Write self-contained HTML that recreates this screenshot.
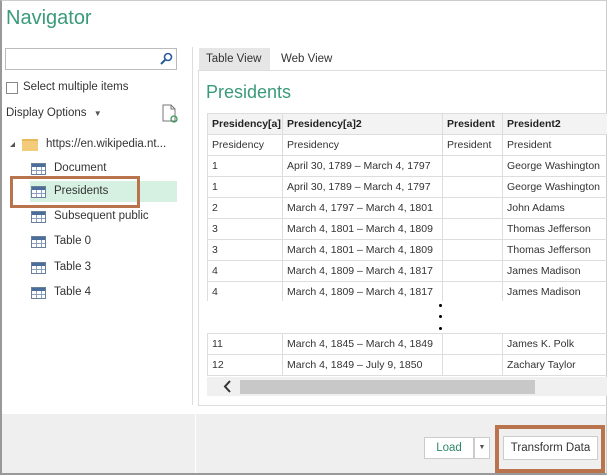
<!DOCTYPE html>
<html><head><style>
*{box-sizing:border-box;margin:0;padding:0}
body{width:607px;height:475px;overflow:hidden;background:#fff;font-family:"Liberation Sans",sans-serif;font-size:11.5px;color:#333;position:relative}
.a{position:absolute}
.frame{left:0;top:0;width:607px;height:475px;border-left:2px solid #999;border-bottom:2px solid #999;border-top:1px solid #ccc;border-right:1px solid #ccc}
.ti{width:15px;height:12px;border:1px solid #6a7f99;background:
linear-gradient(#4a6d9c 0 3px,transparent 3px),
repeating-linear-gradient(90deg,transparent 0 4px,#8aa0bb 4px 5px),
repeating-linear-gradient(0deg,#fff 0 3px,#8aa0bb 3px 4px)}
table{border-collapse:collapse;font-size:10.5px;table-layout:fixed}
td{border:1px solid #ddd;height:21px;padding:0 4px;white-space:nowrap;overflow:hidden;color:#333}
tr.h td{font-weight:bold;background:#f3f3f3;color:#222}
</style></head><body>
<div class="a frame"></div>
<div class="a" style="left:6px;top:7px;font-size:20px;color:#3a9a7a">Navigator</div>
<div class="a" style="left:5px;top:48px;width:172px;height:22px;border:1px solid #bbb"></div>
<svg class="a" style="left:159px;top:52px" width="14" height="14"><circle cx="9" cy="5" r="3.5" stroke="#2a5a9a" stroke-width="1.6" fill="none"/><line x1="6.5" y1="7.5" x2="2" y2="12" stroke="#2a5a9a" stroke-width="2"/></svg>
<div class="a" style="left:6px;top:82px;width:12px;height:12px;border:1px solid #888"></div>
<div class="a" style="left:23px;top:81px">Select multiple items</div>
<div class="a" style="left:6px;top:107px">Display Options <span style="font-size:8px;color:#555;margin-left:4px">▼</span></div>
<svg class="a" style="left:162px;top:104px" width="16" height="19"><path d="M1 1h8l4 4v12H1z" fill="#fff" stroke="#777"/><path d="M9 1v4h4" fill="none" stroke="#777"/><circle cx="12" cy="15" r="3" fill="none" stroke="#3a9a5a" stroke-width="1.3"/></svg>
<div class="a" style="left:10px;top:142px;width:0;height:0;border-left:5px solid transparent;border-bottom:5px solid #555"></div>
<div class="a" style="left:22px;top:139px;width:16px;height:12px;background:#f3cc7a;border-top:2px solid #e8b85a"></div>
<div class="a" style="left:46px;top:138px">https://en.wikipedia.nt...</div>
<div class="a" style="left:30px;top:181px;width:147px;height:21px;background:#d6f0e1"></div>
<div class="a" style="left:10px;top:176px;width:130px;height:32px;border:3px solid #b9734d"></div>
<div class="a ti" style="left:31px;top:163px"></div><div class="a" style="left:54px;top:162px">Document</div>
<div class="a ti" style="left:31px;top:186px"></div><div class="a" style="left:54px;top:185px">Presidents</div>
<div class="a ti" style="left:31px;top:211px"></div><div class="a" style="left:54px;top:210px">Subsequent public</div>
<div class="a ti" style="left:31px;top:236px"></div><div class="a" style="left:54px;top:235px">Table 0</div>
<div class="a ti" style="left:31px;top:262px"></div><div class="a" style="left:54px;top:261px">Table 3</div>
<div class="a ti" style="left:31px;top:287px"></div><div class="a" style="left:54px;top:286px">Table 4</div>
<div class="a" style="left:192px;top:47px;width:1px;height:358px;background:#ddd"></div>
<div class="a" style="left:199px;top:48px;width:71px;height:22px;background:#e6e6e6"></div>
<div class="a" style="left:206px;top:53px">Table View</div>
<div class="a" style="left:281px;top:53px">Web View</div>
<div class="a" style="left:198px;top:70px;width:412px;height:336px;border:1px solid #ddd"></div>
<div class="a" style="left:206px;top:82px;font-size:18px;color:#3a9a7a">Presidents</div>
<div class="a" style="left:207px;top:113px;width:400px;height:188px;overflow:hidden">
<table style="width:420px">
<colgroup><col style="width:75px"><col style="width:160px"><col style="width:60px"><col style="width:125px"></colgroup>
<tr class="h"><td>Presidency[a]</td><td>Presidency[a]2</td><td>President</td><td>President2</td></tr>
<tr><td>Presidency</td><td>Presidency</td><td>President</td><td>President</td></tr>
<tr><td>1</td><td>April 30, 1789 – March 4, 1797</td><td></td><td>George Washington</td></tr>
<tr><td>1</td><td>April 30, 1789 – March 4, 1797</td><td></td><td>George Washington</td></tr>
<tr><td>2</td><td>March 4, 1797 – March 4, 1801</td><td></td><td>John Adams</td></tr>
<tr><td>3</td><td>March 4, 1801 – March 4, 1809</td><td></td><td>Thomas Jefferson</td></tr>
<tr><td>3</td><td>March 4, 1801 – March 4, 1809</td><td></td><td>Thomas Jefferson</td></tr>
<tr><td>4</td><td>March 4, 1809 – March 4, 1817</td><td></td><td>James Madison</td></tr>
<tr><td>4</td><td>March 4, 1809 – March 4, 1817</td><td></td><td>James Madison</td></tr>
</table></div>
<div class="a" style="left:439px;top:304px;width:3px;height:3px;border-radius:50%;background:#000"></div>
<div class="a" style="left:439px;top:315px;width:3px;height:3px;border-radius:50%;background:#000"></div>
<div class="a" style="left:439px;top:327px;width:3px;height:3px;border-radius:50%;background:#000"></div>
<div class="a" style="left:207px;top:333px;width:400px;height:44px;overflow:hidden">
<table style="width:420px">
<colgroup><col style="width:75px"><col style="width:160px"><col style="width:60px"><col style="width:125px"></colgroup>
<tr><td>11</td><td>March 4, 1845 – March 4, 1849</td><td></td><td>James K. Polk</td></tr>
<tr><td>12</td><td>March 4, 1849 – July 9, 1850</td><td></td><td>Zachary Taylor</td></tr>
</table></div>
<div class="a" style="left:207px;top:377px;width:400px;height:19px;background:#f0f0f0"></div>
<div class="a" style="left:240px;top:380px;width:295px;height:14px;background:#c8c8c8"></div>
<svg class="a" style="left:222px;top:380px" width="10" height="13"><path d="M8 1L3 6.5 8 12" fill="none" stroke="#333" stroke-width="2"/></svg>
<div class="a" style="left:2px;top:414px;width:604px;height:59px;background:#efefef"></div>
<div class="a" style="left:195px;top:414px;width:1px;height:59px;background:#fff"></div>
<div class="a" style="left:424px;top:437px;width:50px;height:22px;background:#fff;border:1px solid #ccc;text-align:center;line-height:20px;color:#2f8a6a">Load</div>
<div class="a" style="left:474px;top:437px;width:16px;height:22px;background:#fff;border:1px solid #ccc;font-size:7px;text-align:center;line-height:20px;color:#555">▼</div>
<div class="a" style="left:495px;top:425px;width:110px;height:48px;border:4px solid #b9734d"></div>
<div class="a" style="left:503px;top:436px;width:95px;height:24px;background:#fff;border:1px solid #ccc;text-align:center;line-height:22px;color:#333">Transform Data</div>
</body></html>
